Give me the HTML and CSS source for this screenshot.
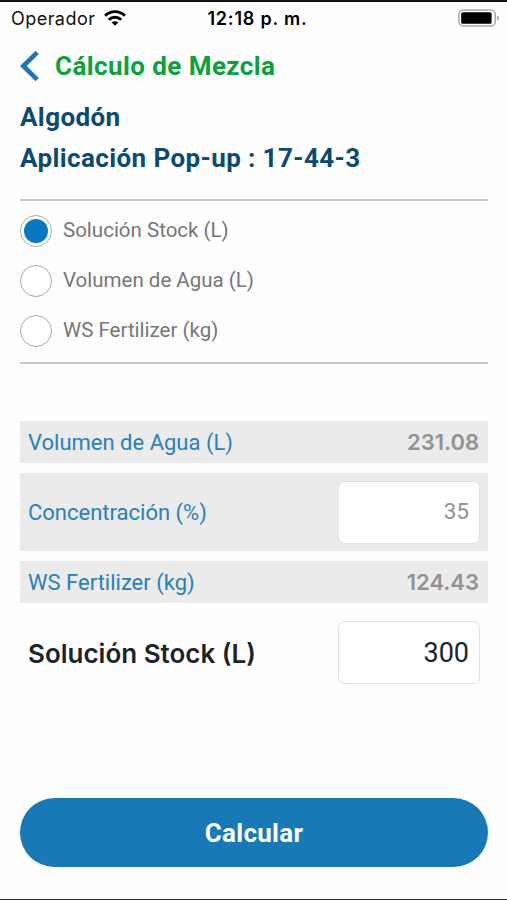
FILE: index.html
```html
<!DOCTYPE html>
<html lang="es">
<head>
<meta charset="utf-8">
<meta name="viewport" content="width=device-width, initial-scale=1">
<title>Cálculo de Mezcla</title>
<link rel="stylesheet" href="styles.css">
</head>
<body>
<div class="screen">
  <header class="status">
    <div class="carrier">
      <span class="carrier-name">Operador</span>
      <svg class="wifi" width="22" height="16" viewBox="0 0 22 16" fill="none" stroke="#000" stroke-width="2.9">
        <path d="M1.1 5.700a14 14 0 0 1 19.800 0"/>
        <path d="M4.800 9.800a8.800 8.800 0 0 1 12.400 0"/>
        <path d="M7.700 12.500a4.700 4.700 0 0 1 6.600 0L11 15.800Z" fill="#000" stroke="none"/>
      </svg>
    </div>
    <span class="time">12:18 p. m.</span>
    <svg class="battery" width="42" height="18" viewBox="0 0 42 18">
      <rect x=".9" y=".9" width="36.4" height="16.2" rx="4.6" fill="#fff" stroke="#aaa" stroke-width="1.5"/>
      <rect x="3.2" y="3.2" width="30.4" height="11.6" rx="1.6" fill="#000"/>
      <path d="M39 6.200Q43 9 39 11.800Z" fill="#aaa"/>
    </svg>
  </header>
  <nav class="titlebar">
    <svg class="back" width="20" height="32" viewBox="0 0 20 32" fill="none" stroke="#1b78b5" stroke-width="4.600"><path d="M18.200 2.300 4.300 16l13.900 13.700"/></svg>
    <h1 class="title">Cálculo de Mezcla</h1>
  </nav>
  <section class="crop">
    <h2 class="crop-line crop-name">Algodón</h2>
    <h2 class="crop-line">Aplicación Pop-up : 17-44-3</h2>
  </section>
  <section class="options">
    <label class="option"><span class="radio checked"></span><span class="option-text">Solución Stock (L)</span></label>
    <label class="option"><span class="radio"></span><span class="option-text">Volumen de Agua (L)</span></label>
    <label class="option"><span class="radio"></span><span class="option-text">WS Fertilizer (kg)</span></label>
  </section>
  <section class="results">
    <div class="row"><span class="label">Volumen de Agua (L)</span><span class="value">231.08</span></div>
    <div class="row tall"><span class="label">Concentración (%)</span><span class="field">35</span></div>
    <div class="row"><span class="label">WS Fertilizer (kg)</span><span class="value">124.43</span></div>
    <div class="row main"><span class="label">Solución Stock (L)</span><span class="field">300</span></div>
  </section>
  <button class="submit" type="button">Calcular</button>
</div>
</body>
</html>
```
FILE: styles.css
```css
* { box-sizing: border-box; }
body { margin: 0; background: #fff; font-family: Roboto, sans-serif; }
h1, h2 { margin: 0; }
.screen {
  height: 900px;
  display: flex;
  flex-direction: column;
  border-top: 2px solid #111;
  border-bottom: 1px solid #333;
  background: #fefefe;
}
.status {
  height: 32px;
  display: grid;
  grid-template-columns: 1fr auto 1fr;
  align-items: center;
  padding: 0 7px 0 11px;
  font-family: Inter, sans-serif;
  font-size: 18px;
  color: #111;
}
.carrier { display: flex; align-items: center; gap: 9px; }
.carrier-name { letter-spacing: 0.45px; }
.wifi { display: block; }
.time { font-weight: 600; color: #000; letter-spacing: 0.8px; margin: 0 -2px 0 2px; }
.battery { justify-self: end; display: block; }
.titlebar { height: 63px; display: flex; align-items: center; padding-left: 19px; gap: 16px; }
.title { font-size: 26px; line-height: 32px; font-weight: 700; color: #0ba23c; letter-spacing: 0.42px; }
.crop { height: 102px; padding-left: 20px; }
.crop-line { font-size: 26px; line-height: 41px; font-weight: 700; color: #0b4a73; letter-spacing: 0.4px; }
.options {
  margin: 0 19px 0 20px;
  height: 165px;
  border-top: 2px solid #c8c8c8;
  border-bottom: 2px solid #c8c8c8;
  padding-top: 14px;
}
.option {
  display: flex;
  align-items: center;
  gap: 11px;
  height: 32px;
  margin-bottom: 18px;
  font-size: 20.5px;
  color: #777;
}
.option-text { padding-bottom: 2px; }
.radio { width: 32px; height: 32px; flex: none; border: 1.5px solid #aaa; border-radius: 50%; display: grid; place-items: center; background: #fff; }
.checked::after { content: ""; width: 24px; height: 24px; border-radius: 50%; background: #0678c2; }
.results { margin: 57px 19px 0 20px; display: flex; flex-direction: column; gap: 10px; }
.row { height: 42px; display: flex; align-items: center; justify-content: space-between; padding: 0 8px; background: #ebebeb; }
.label { font-size: 22px; color: #2a80b9; }
.value { font-family: Inter, sans-serif; font-size: 22px; font-weight: 600; color: #929292; padding-right: 1px; }
.tall { height: 78px; }
.field {
  width: 142px;
  height: 63px;
  border: 1.5px solid #dde1ea;
  border-radius: 7px;
  background: #fff;
  display: flex;
  align-items: center;
  justify-content: flex-end;
  padding: 0 10px 2px 0;
  font-size: 22.5px;
  color: #929292;
}
.main { height: 79px; background: none; }
.main .label { font-family: Inter, sans-serif; font-size: 26px; font-weight: 600; color: #1b2528; padding-top: 1px; }
.main .field { font-size: 27px; padding: 1px 10px 0 0; color: #1b2528; }
.submit {
  margin: 106px 19px 0 20px;
  height: 69px;
  border: 0;
  border-radius: 35px;
  background: #1978b6;
  color: #fff;
  font: 700 26px Roboto, sans-serif;
  letter-spacing: 0.3px;
}
```
